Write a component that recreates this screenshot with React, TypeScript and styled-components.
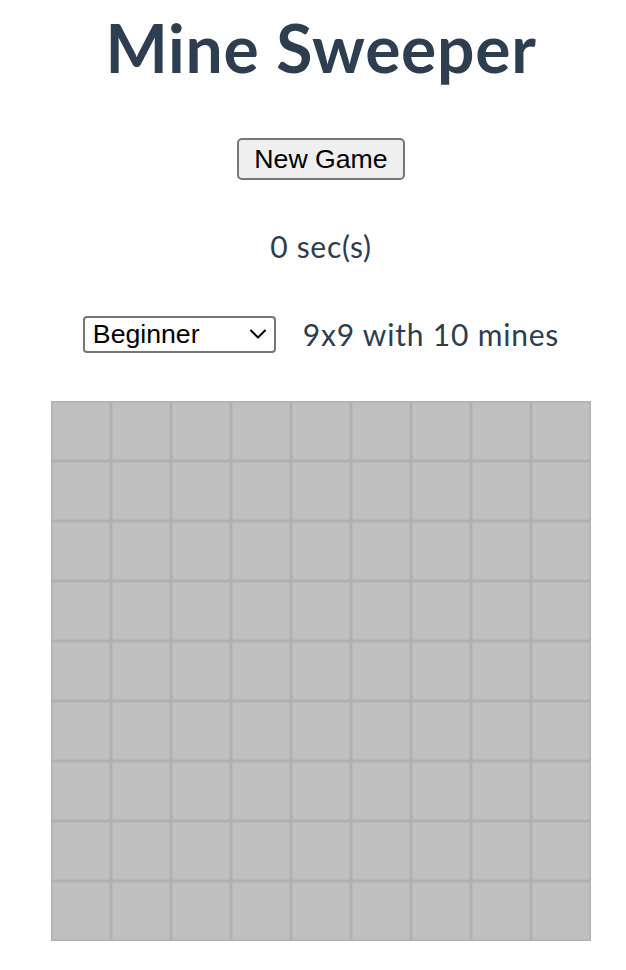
import React, { useState } from "react";
import styled, { createGlobalStyle } from "styled-components";

const GlobalStyle = createGlobalStyle`
  html, body { margin: 0; padding: 0; background: #ffffff; }
  body { font-family: Lato, "Noto Sans", Arial, sans-serif; color: #2c3e50; }
`;

const Page = styled.div`
  display: flex;
  flex-direction: column;
  align-items: center;
  padding-left: 16px;
  -webkit-font-smoothing: antialiased;
`;

const Title = styled.h1`
  margin: 0;
  font-family: Lato, "Noto Sans", sans-serif;
  font-weight: 700;
  font-size: 66px;
  line-height: 96px;
  color: #2c3e50;
  letter-spacing: 0.7px;
`;

const NewGameButton = styled.button`
  margin-top: 42px;
  height: 42px;
  padding: 0 15px;
  font-family: Arial, "Liberation Sans", sans-serif;
  font-size: 26.67px;
  color: #000;
  background: #efefef;
  border: 2px solid #767676;
  border-radius: 5px;
  cursor: pointer;
`;

const Timer = styled.p`
  margin: 44px 0 0 0;
  font-size: 30px;
  line-height: 44px;
  letter-spacing: 0.7px;
`;

const LevelRow = styled.div`
  margin-top: 46px;
  display: flex;
  align-items: center;
  gap: 27px;
`;

const SelectWrap = styled.div`
  position: relative;
  display: flex;
`;

const LevelSelect = styled.select`
  appearance: none;
  -webkit-appearance: none;
  width: 193px;
  height: 37px;
  padding: 0 0 0 8px;
  font-family: Arial, "Liberation Sans", sans-serif;
  font-size: 26.67px;
  color: #000;
  background: #fff;
  border: 2px solid #767676;
  border-radius: 4px;
`;

const Chevron = styled.svg`
  position: absolute;
  right: 9px;
  top: 50%;
  transform: translateY(-50%);
  pointer-events: none;
`;

const LevelInfo = styled.span`
  font-size: 30px;
  line-height: 40px;
  letter-spacing: 0.8px;
`;

const Board = styled.div`
  margin-top: 47px;
  display: grid;
  grid-template-columns: repeat(9, 60px);
  grid-auto-rows: 60px;
  margin-bottom: 20px;
`;

const Cell = styled.div`
  box-sizing: border-box;
  background: #c0c0c0;
  border: 1px solid #b0b0b0;
  box-shadow: inset 0 0 2px #a9a9a9;
`;

export default function App() {
  const [level, setLevel] = useState("beginner");
  const cells = Array.from({ length: 81 }, (_, i) => i);
  return (
    <>
      <GlobalStyle />
      <Page>
        <Title>Mine Sweeper</Title>
        <NewGameButton>New Game</NewGameButton>
        <Timer>0 sec(s)</Timer>
        <LevelRow>
          <SelectWrap>
            <LevelSelect value={level} onChange={(e) => setLevel(e.target.value)}>
              <option value="beginner">Beginner</option>
              <option value="intermediate">Intermediate</option>
              <option value="expert">Expert</option>
            </LevelSelect>
            <Chevron width="18" height="12" viewBox="0 0 18 12">
              <path d="M2 2.5 L9 9.5 L16 2.5" fill="none" stroke="#000" strokeWidth="2" strokeLinecap="round" strokeLinejoin="round" />
            </Chevron>
          </SelectWrap>
          <LevelInfo>9x9 with 10 mines</LevelInfo>
        </LevelRow>
        <Board>
          {cells.map((i) => (
            <Cell key={i} />
          ))}
        </Board>
      </Page>
    </>
  );
}
